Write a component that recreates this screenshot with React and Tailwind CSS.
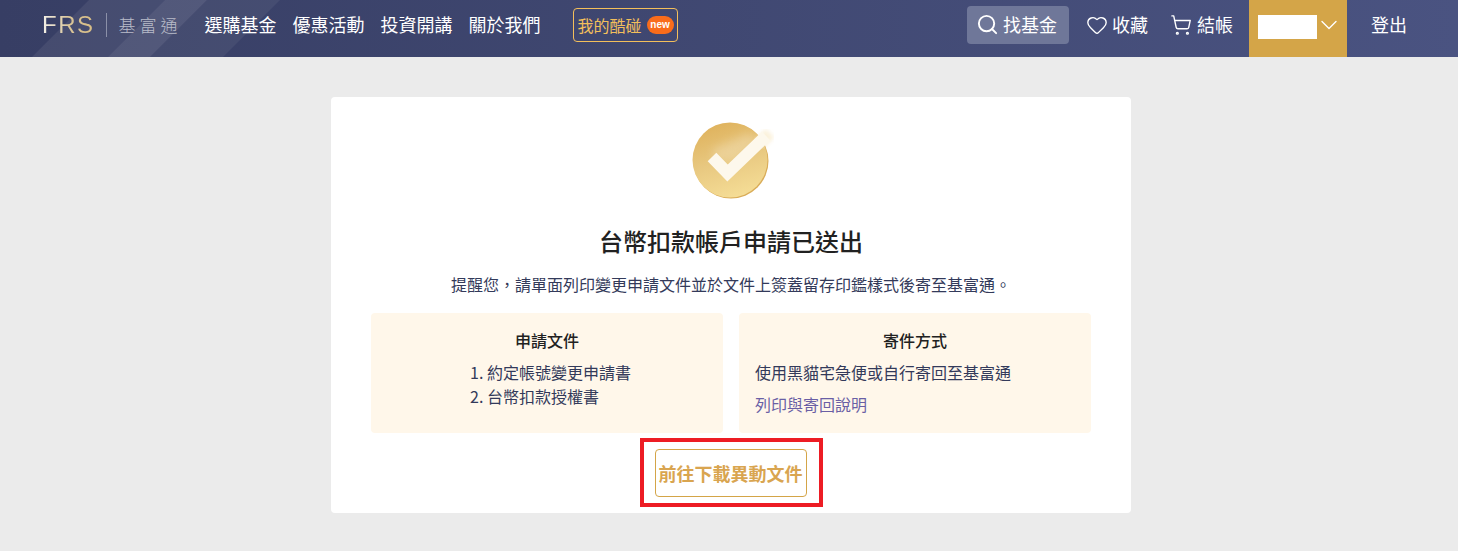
import { ChevronDown, Heart, Search, ShoppingCart } from "lucide-react";

const font = "font-['Noto_Sans_CJK_TC','Liberation_Sans',sans-serif]";

function HeaderStripes() {
  return (
    <svg className="absolute left-0 top-0 h-[57px] w-[300px]" viewBox="0 0 300 57">
      <polygon points="32,57 89,0 165,0 108,57" fill="#ffffff" opacity="0.07" />
      <polygon points="108,57 165,0 207,0 150,57" fill="#ffffff" opacity="0.13" />
      <polygon points="150,57 207,0 280,0 223,57" fill="#ffffff" opacity="0.06" />
    </svg>
  );
}

function Logo() {
  return (
    <div className="flex items-center">
      <span className="bg-gradient-to-r from-[#f4f1ea] via-[#d9c59a] to-[#d8bd83] bg-clip-text font-['Liberation_Sans',sans-serif] text-[24px] leading-none tracking-[1.5px] text-transparent">
        FRS
      </span>
      <span className="ml-[11px] mr-[12px] h-[24px] w-px bg-[#8b90a8]" />
      <span className="text-[17px] font-light tracking-[4px] text-[#b9bcc9]">基富通</span>
    </div>
  );
}

function CheckBadge() {
  return (
    <svg width="90" height="90" viewBox="0 0 90 90">
      <defs>
        <linearGradient id="coin" x1="0.3" y1="0" x2="0.6" y2="1">
          <stop offset="0" stopColor="#dfb25c" />
          <stop offset="0.5" stopColor="#e8c880" />
          <stop offset="1" stopColor="#f5dd96" />
        </linearGradient>
        <filter id="soft" x="-30%" y="-30%" width="160%" height="160%">
          <feGaussianBlur stdDeviation="4" />
        </filter>
        <filter id="glow" x="-30%" y="-30%" width="160%" height="160%">
          <feGaussianBlur stdDeviation="2" />
        </filter>
      </defs>
      <circle cx="45" cy="46" r="37.5" fill="#d9ac58" />
      <circle cx="44" cy="45" r="37.5" fill="url(#coin)" />
      <polygon points="26,34 62,18 74,26 50,44 30,46" fill="#ffffff" opacity="0.22" filter="url(#soft)" />
      <polyline
        points="72,30 84,18"
        fill="none"
        stroke="#f7e4b8"
        strokeWidth="12"
        opacity="0.5"
        filter="url(#glow)"
      />
      <polyline
        points="26,42 41.5,58 80,21"
        fill="none"
        stroke="#fdf8ec"
        strokeWidth="12"
      />
    </svg>
  );
}

export default function App() {
  return (
    <div className={`${font} min-h-[551px] bg-[#ebebeb]`}>
      <header className="relative flex h-[57px] items-center overflow-hidden bg-gradient-to-r from-[#373e64] to-[#4a5381] text-white">
        <HeaderStripes />
        <div className="relative mb-2 ml-[42px] flex items-center">
          <Logo />
          <nav className="ml-[23px] flex gap-4 text-[18px]">
            <span>選購基金</span>
            <span>優惠活動</span>
            <span>投資開講</span>
            <span>關於我們</span>
          </nav>
          <div className="ml-[32px] flex h-[34px] w-[105px] items-center gap-[5px] rounded border border-[#f3bf5b] pl-1 text-[16px] text-[#f3bf5b]">
            我的酷碰
            <span className="flex h-[18px] w-[27px] items-center justify-center rounded-full bg-[#f96c1b] font-['Liberation_Sans',sans-serif] text-[10px] font-bold text-white">
              new
            </span>
          </div>
        </div>
        <div className="relative ml-auto flex h-full items-center text-[18px]">
          <div className="mb-2 flex h-[38px] w-[102px] items-center gap-1 rounded bg-[#6f7799] pl-[9px]">
            <Search size={23} strokeWidth={2} />
            找基金
          </div>
          <div className="mb-2 ml-[17px] flex items-center gap-1">
            <Heart size={22} strokeWidth={1.5} />
            收藏
          </div>
          <div className="mb-2 ml-[22px] flex items-center gap-[5px]">
            <ShoppingCart size={22} strokeWidth={1.5} />
            結帳
          </div>
          <div className="ml-[16px] flex h-full w-[98px] items-center bg-[#d4a548] pl-[9px]">
            <div className="mb-[3px] h-[24px] w-[59px] bg-white" />
            <ChevronDown size={28} strokeWidth={1.2} className="-ml-[2px] mb-2" />
          </div>
          <div className="mb-2 ml-[24px] mr-[51px]">登出</div>
        </div>
      </header>

      <main className="flex justify-center pl-1 pt-10">
        <div className="flex h-[416px] w-[800px] flex-col items-center rounded bg-white px-10 pt-[18px] text-[#212121]">
          <CheckBadge />
          <h1 className="mt-[18px] text-[24px] font-medium leading-[36px]">
            台幣扣款帳戶申請已送出
          </h1>
          <p className="mt-[13px] text-[16px] leading-6 text-[#333a5a]">
            提醒您，請單面列印變更申請文件並於文件上簽蓋留存印鑑樣式後寄至基富通。
          </p>
          <div className="mt-[17px] grid w-full grid-cols-2 gap-4">
            <div className="h-[120px] rounded-sm bg-[#fff7ea] pt-[15px] text-center">
              <div className="text-[16px] font-medium leading-6">申請文件</div>
              <ol className="mt-2 whitespace-nowrap pl-[99px] text-left text-[16px] leading-6 text-[#333a5a]">
                <li>1. 約定帳號變更申請書</li>
                <li>2. 台幣扣款授權書</li>
              </ol>
            </div>
            <div className="h-[120px] rounded-sm bg-[#fff7ea] px-4 pt-[15px]">
              <div className="text-center text-[16px] font-medium leading-6">寄件方式</div>
              <div className="mt-2 text-[16px] leading-6 text-[#333a5a]">
                使用黑貓宅急便或自行寄回至基富通
              </div>
              <div className="mt-2 text-[16px] leading-6 text-[#6a5fa5]">列印與寄回說明</div>
            </div>
          </div>
          <div className="mt-[5px] border-4 border-[#ed1c24] pl-[11px] pr-[12px] pt-[7px] pb-[6px]">
            <button className="h-[48px] w-[152px] rounded border border-[#d4a548] text-[18px] font-bold text-[#d9a550]">
              前往下載異動文件
            </button>
          </div>
        </div>
      </main>
    </div>
  );
}
